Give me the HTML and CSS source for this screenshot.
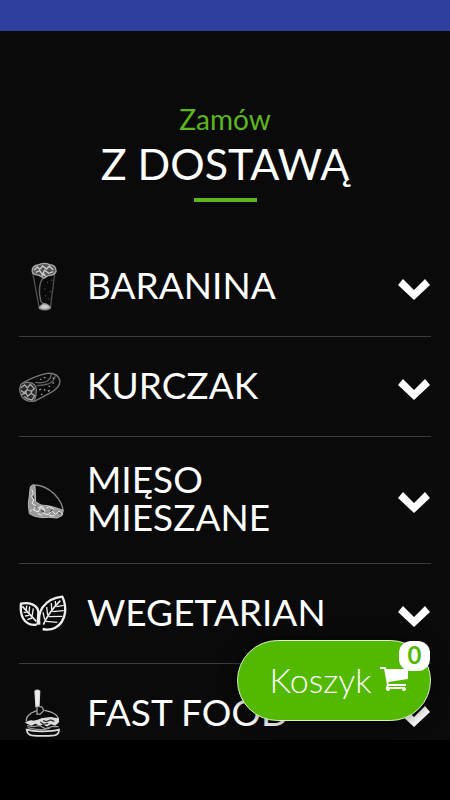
FILE: index.html
```
<!DOCTYPE html>
<html lang="pl">
<head>
    <meta charset="UTF-8">
    <meta name="viewport" content="width=device-width, initial-scale=1.0">
    <title>Zamów z dostawą</title>
    <link rel="stylesheet" href="styles.css">
</head>
<body>
    <div class="topbar"></div>
    <main class="content">
        <header class="heading">
            <p class="heading-small">Zamów</p>
            <h1>Z DOSTAWĄ</h1>
        </header>
        <div class="menu">
            <button class="category" type="button">
                <svg class="icon" viewBox="27 36 150 147" fill="none" stroke="#777" stroke-width="4">
                    <path d="M68 68l20 107q16 11 33 0l13-103" stroke="#505050"/>
                    <path d="M102 80q-22 26-9 75l11 10" stroke="#666"/>
                    <path d="M67 66q-3-17 16-21 20-9 35-1 21 1 20 21-6 12-24 12l-12 8-15-9q-17-2-20-10z" fill="#555" stroke="#aaa"/>
                    <path d="M72 61l10-10 7 7 9-10 12 9 8-9 12 12M77 67l12-5 8 11 7-12 12 9 14-5M95 79l7-7 5 8" stroke="#ccc"/>
                    <path d="M88 174q3-9 16-13 13 4 17 12-15 10-33 1z" fill="#ccc" stroke="#999"/>
                    <path d="M111 96l3 3M124 89l2 4M103 116l3 2M119 123l3 2M105 136l3 3M116 145l2 3" stroke="#444"/>
                </svg>
                <span class="name">BARANINA</span>
                <svg class="arrow" viewBox="0 0 32 21"><path d="M5 0L0 6l16 15L32 6l-5-6-11 11z" fill="#fff"/></svg>
            </button>
            <button class="category" type="button">
                <svg class="icon" viewBox="27 36 150 147" fill="none" stroke="#888" stroke-width="4">
                    <path d="M38 99q31-19 73-29 34-2 39 23 0 22-32 37l-45 24" stroke="#777"/>
                    <path d="M80 107q11 0 34-5 21-9 22-28M75 97q24 4 37-4 13-10 11-21" stroke="#606060"/>
                    <path d="M33 103q11-9 27-5 17 3 19 19 1 18-6 36-21 5-37-12-12-20-3-38z" fill="#2b2b2b" stroke="#777"/>
                    <path d="M33 113l11-8 8 9 9-11 12 13-9 8-12-5-10 9-9-6M34 134l14-5 5 10 10-9 11 7-8 13-13-3-10-7M50 119l-3 12M66 120l-3 12" stroke="#aaa"/>
                    <path d="M91 87l3 2M103 82l3 3M88 120l5-3M102 119l4 2M116 110l4-2M128 101l3-4M93 134l4-2M114 124l5-3M129 83l2 4" stroke="#aaa"/>
                </svg>
                <span class="name">KURCZAK</span>
                <svg class="arrow" viewBox="0 0 32 21"><path d="M5 0L0 6l16 15L32 6l-5-6-11 11z" fill="#fff"/></svg>
            </button>
            <button class="category" type="button">
                <svg class="icon" viewBox="27 32 150 147" fill="none" stroke="#999" stroke-width="3">
                    <path d="M71 59q34 0 62 27 25 27 26 49" stroke="#888" stroke-width="4"/>
                    <path d="M61 64l8-6 6 4 2 47 16 10 26 3 21 6 20 7-4 16-15 7-25-2-20 1-22-4-16-8-3-28z" fill="#999" stroke="#bbb"/>
                    <path d="M65 72l5 12-6 9 7 11-5 10 12 8-8 12 15 6 7-14 14 10-7 9 17 3 8-13 12 12 12-10 10 10M84 127l12-4 8 10M109 128l9-4 15 9M83 145l14 5M66 132l-5 7M118 151l16 1" stroke="#eee"/>
                    <path d="M69 91l3 9M76 124l5 2M93 136l10 4M120 139l8-6M145 142l8 3" stroke="#333"/>
                </svg>
                <span class="name">MIĘSO MIESZANE</span>
                <svg class="arrow" viewBox="0 0 32 21"><path d="M5 0L0 6l16 15L32 6l-5-6-11 11z" fill="#fff"/></svg>
            </button>
            <button class="category" type="button">
                <svg class="icon" viewBox="27 27 150 147" fill="none" stroke="#eee" stroke-width="7">
                    <path d="M80 134q-21 3-35-11-16-18-12-52 19-4 34 2 18 8 18 24l-2 37"/>
                    <path d="M88 134q-4-30 9-51 20-29 60-33 11 22 8 49-5 31-29 44-17 9-38 4"/>
                    <path d="M37 79l42 45M151 62q-35 35-51 72" stroke-width="5"/>
                    <path d="M49 90l1-13M57 99l2-20M66 109l4-24M50 97l-9 0M58 106l-13 2M66 114l-14 5M104 119l-5-22M113 105l-3-24M125 91l-1-22M137 77l-1-14M108 124l34 3M116 110l41-1M127 95l34-3M139 80l22-4" stroke-width="4"/>
                </svg>
                <span class="name">WEGETARIAN</span>
                <svg class="arrow" viewBox="0 0 32 21"><path d="M5 0L0 6l16 15L32 6l-5-6-11 11z" fill="#fff"/></svg>
            </button>
            <button class="category" type="button">
                <svg class="icon" viewBox="27 27 150 147" fill="none" stroke="#ddd" stroke-width="4">
                    <path d="M75 34q7-7 14 0l-2 43-9 3z" fill="#eee"/>
                    <path d="M81 80v23l10-1 10-10-4-10-11-3" stroke="#999"/>
                    <path d="M49 124q-1-15 15-25l16-7M103 91q36 6 42 24l-2 10" stroke="#aaa"/>
                    <path d="M49 128q11-7 22-4 14-2 23-7 18-3 29-4l22 4v9l-10 9-12-5-12 7-13-6-9 5-12-7-13 6z" fill="#ddd"/>
                    <path d="M99 122l10 3 13-5 11 4M91 126l9 7 15-3" stroke="#333"/>
                    <path d="M51 137l18 3 20-3 17 9 22-7 18 1M53 143q22 7 47 6l20-5" stroke="#999"/>
                    <path d="M50 149q22 6 48 5 31 0 49-5 0 15-14 17-36 3-68 0-13-2-15-17z" stroke-width="5"/>
                </svg>
                <span class="name">FAST FOOD</span>
                <svg class="arrow" viewBox="0 0 32 21"><path d="M5 0L0 6l16 15L32 6l-5-6-11 11z" fill="#fff"/></svg>
            </button>
        </div>
        <button class="cart" type="button">
            <span>Koszyk</span>
            <svg class="cart-icon" viewBox="0 0 28 25" fill="none" stroke="#fff" stroke-width="2">
                <path d="M0 1h5l3 17h18M8 17l-1 4h18"/>
                <path d="M5 2h23v10L8 15z" fill="#fff" stroke="none"/>
                <circle cx="8" cy="22" r="2" fill="#fff" stroke="none"/>
                <circle cx="24" cy="22" r="2" fill="#fff" stroke="none"/>
            </svg>
            <span class="badge">0</span>
        </button>
    </main>
    <div class="bottombar"></div>
</body>
</html>
```
FILE: styles.css
```
* {
    box-sizing: border-box;
}
body {
    font-family: Lato, sans-serif;
    display: flex;
    flex-direction: column;
    height: 100vh;
    margin: 0;
    background: #000;
    color: #fff;
}
.topbar {
    height: 31px;
    flex-shrink: 0;
    background: #2f3f9e;
}
.content {
    flex: 1;
    min-height: 0;
    overflow: hidden;
    position: relative;
    background: #0a0a0a;
}
.bottombar {
    height: 60px;
    flex-shrink: 0;
    background: #000;
}
.heading {
    padding: 68px 20px 0;
    text-align: center;
}
.heading-small {
    margin: 0;
    font-size: 28px;
    line-height: 40px;
    color: #5cb61c;
}
.heading h1 {
    margin: 0;
    font-size: 43px;
    font-weight: 400;
    line-height: 50px;
}
.heading h1::after {
    content: "";
    display: block;
    width: 63px;
    height: 4px;
    margin: 9px auto 0;
    background: #5cb61c;
}
.menu {
    padding: 35px 19px 0;
}
.category {
    display: flex;
    align-items: center;
    gap: 18px;
    width: 100%;
    padding: 25px 1px 25px 0;
    border: 0;
    border-bottom: 1px solid #3c3c3c;
    background: none;
    color: #fff;
    font-family: inherit;
    font-size: 37px;
    line-height: 38px;
    text-align: left;
    cursor: pointer;
}
.icon {
    width: 50px;
    height: 49px;
    flex-shrink: 0;
}
.name {
    flex: 1;
    margin: -2px 0 2px;
}
.arrow {
    width: 32px;
    height: 21px;
    flex-shrink: 0;
    margin-top: 5px;
}
.cart {
    position: absolute;
    right: 19px;
    bottom: 19px;
    display: flex;
    align-items: center;
    justify-content: center;
    gap: 9px;
    width: 194px;
    height: 81px;
    padding: 0 0 2px 10px;
    border: 1px solid #d9f0c8;
    border-radius: 41px;
    background: #52b900;
    box-shadow: 0 0 16px rgba(0, 0, 0, 0.5);
    color: #fff;
    font-family: inherit;
    font-size: 34px;
    font-weight: 300;
    line-height: 38px;
    cursor: pointer;
}
.cart-icon {
    width: 28px;
    height: 25px;
}
.badge {
    position: absolute;
    top: 0;
    right: 0;
    width: 31px;
    height: 30px;
    border-radius: 12px;
    background: #fff;
    color: #52b900;
    font-size: 24px;
    font-weight: 700;
    line-height: 28px;
}
```
